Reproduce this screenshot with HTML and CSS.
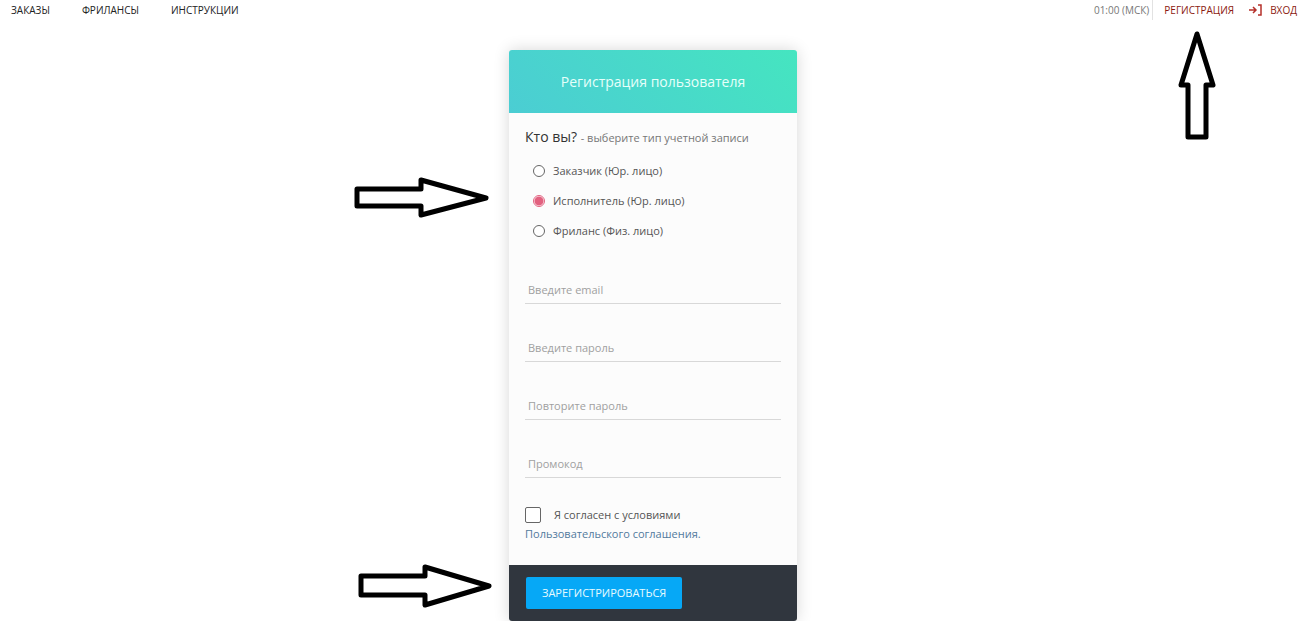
FILE: index.html
```html
<!DOCTYPE html>
<html lang="ru">
<head>
  <meta charset="UTF-8" />
  <meta name="viewport" content="width=device-width, initial-scale=1.0" />
  <title>Регистрация пользователя</title>
  <link rel="stylesheet" href="styles.css">
</head>
<body>

  <header class="topbar">
    <nav class="menu">
      <a href="#">ЗАКАЗЫ</a>
      <a href="#">ФРИЛАНСЫ</a>
      <a href="#">ИНСТРУКЦИИ</a>
    </nav>
    <div class="account">
      <span class="clock">01:00 (МСК)</span>
      <a href="#" class="register-link">РЕГИСТРАЦИЯ
        <svg class="arrow arrow-up" width="40" height="110" viewBox="0 0 40 110">
          <path d="M20 4 L36 55 H29 V107 H11 V55 H4 Z" />
        </svg>
      </a>
      <a href="#" class="login-link">
        <svg width="13" height="12" viewBox="0 0 13 12">
          <path d="M0 6 H7 M4 3 L7 6 L4 9 M9 1 H12 V11 H9" />
        </svg>
        ВХОД
      </a>
    </div>
  </header>

  <main class="page">
    <form class="card">
      <h1 class="card-header">Регистрация пользователя</h1>

      <div class="card-body">
        <fieldset class="types">
          <legend>Кто вы? <small>- выберите тип учетной записи</small></legend>
          <label><input type="radio" name="type"> Заказчик (Юр. лицо)</label>
          <label><input type="radio" name="type" checked> Исполнитель (Юр. лицо)</label>
          <label><input type="radio" name="type"> Фриланс (Физ. лицо)</label>
        </fieldset>

        <div class="fields">
          <input type="email" placeholder="Введите email" aria-label="Введите email">
          <input type="password" placeholder="Введите пароль" aria-label="Введите пароль">
          <input type="password" placeholder="Повторите пароль" aria-label="Повторите пароль">
          <input type="text" placeholder="Промокод" aria-label="Промокод">
        </div>

        <div class="agree">
          <label><input type="checkbox"> Я согласен с условиями</label>
          <a href="#">Пользовательского соглашения.</a>
        </div>
      </div>

      <div class="card-footer">
        <button type="submit">ЗАРЕГИСТРИРОВАТЬСЯ</button>
      </div>

      <!-- Hint arrows -->
      <svg class="arrow arrow-type" width="136" height="42" viewBox="0 0 136 42">
        <path d="M3 12 H67 V3 L132 21 L67 38 V29 H3 Z" />
      </svg>
      <svg class="arrow arrow-submit" width="136" height="44" viewBox="0 0 136 44">
        <path d="M3 12 H67 V3 L131 22 L67 41 V31 H3 Z" />
      </svg>
    </form>
  </main>

</body>
</html>
```
FILE: styles.css
```css
* {
  box-sizing: border-box;
}

body {
  margin: 0;
  background-color: #fff;
  color: #555;
  font-family: "Open Sans", "Noto Sans", sans-serif;
  font-size: 11px;
  line-height: 20px;
}

a {
  text-decoration: none;
}

/* Top bar */
.topbar {
  display: flex;
  justify-content: space-between;
  padding: 0 11px;
  font-size: 10px;
}

.menu {
  display: flex;
  gap: 32px;
}

.menu a {
  color: #222;
}

.account {
  display: flex;
  align-items: center;
}

.clock {
  padding-right: 3px;
  border-right: 1px solid #e2e2e2;
  color: #777;
}

.account a {
  color: #8b1a10;
}

.register-link {
  position: relative;
  margin-left: 11px;
}

.login-link {
  display: flex;
  align-items: center;
  gap: 8px;
  margin-left: 15px;
}

.login-link svg {
  fill: none;
  stroke: #b5302a;
  stroke-width: 1.5;
}

/* Card */
.page {
  display: flex;
  justify-content: center;
  padding: 30px 2px 0 0;
}

.card {
  position: relative;
  width: 288px;
  border-radius: 3px;
  background-color: #fcfcfc;
  box-shadow: 0 0 16px rgba(0, 0, 0, 0.16);
}

.card-header {
  margin: 0;
  padding: 20px 16px 19px;
  border-radius: 3px 3px 0 0;
  background: linear-gradient(45deg, #4bcdd3, #45e5c0);
  color: #e6fffa;
  font-size: 14px;
  font-weight: 500;
  line-height: 24px;
  text-align: center;
}

.card-body {
  padding: 12px 16px 22px;
}

.types {
  margin: 0;
  padding: 0;
  border: none;
}

.types legend {
  padding: 0;
  color: #333;
  font-size: 14px;
  line-height: 24px;
}

.types small {
  color: #777;
  font-size: 11px;
}

.types label {
  display: flex;
  align-items: center;
  gap: 8px;
  height: 30px;
  padding: 0 8px;
}

.types label:first-of-type {
  margin-top: 6px;
}

.types input {
  appearance: none;
  width: 12px;
  height: 12px;
  margin: 0;
  border: 1px solid #666;
  border-radius: 50%;
  background-color: #fff;
}

.types input:checked {
  border-color: #e2617f;
  background: radial-gradient(circle, #e2617f 4px, #fff 5px);
}

.fields {
  display: grid;
  gap: 30px;
  margin-top: 30px;
}

.fields input {
  width: 100%;
  height: 28px;
  padding: 0 3px;
  border: none;
  border-bottom: 1px solid #d8d8d8;
  background: none;
  font: inherit;
}

.fields input::placeholder {
  color: #a0a0a0;
}

.agree {
  margin-top: 27px;
  line-height: 19px;
}

.agree label {
  display: flex;
  align-items: center;
  gap: 13px;
}

.agree input {
  appearance: none;
  width: 16px;
  height: 16px;
  margin: 0;
  border: 1px solid #666;
  border-radius: 2px;
  background-color: #fff;
}

.agree a {
  color: #527a9c;
}

.card-footer {
  padding: 12px 17px;
  border-radius: 0 0 3px 3px;
  background-color: #30363e;
}

.card-footer button {
  display: block;
  height: 32px;
  padding: 0 16px;
  border: none;
  border-radius: 2px;
  background-color: #06a8f6;
  color: #e6fbff;
  font: inherit;
  font-weight: 500;
  cursor: pointer;
}

/* Arrows drawn over the page */
.arrow {
  position: absolute;
  fill: #fff;
  stroke: #000;
  stroke-width: 5;
  stroke-linejoin: round;
  pointer-events: none;
}

.arrow-up {
  top: 30px;
  left: 13px;
}

.arrow-type {
  top: 127px;
  right: 307px;
}

.arrow-submit {
  top: 514px;
  right: 303px;
}
```
